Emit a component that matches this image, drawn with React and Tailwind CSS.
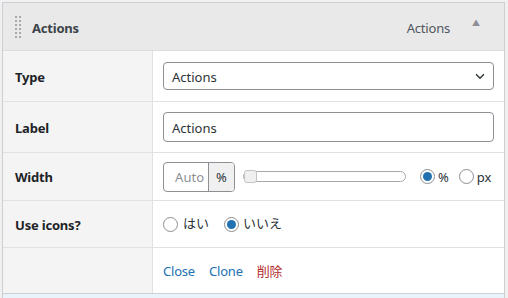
const FONT = { fontFamily: '"Noto Sans", "Noto Sans CJK JP", sans-serif' };

function Radio({ checked }) {
  return (
    <span className="flex h-[15px] w-[15px] items-center justify-center rounded-full border border-[#8c8f94] bg-white">
      {checked && <span className="h-[9px] w-[9px] rounded-full bg-[#2271b1]" />}
    </span>
  );
}

function Row({ label, children, h }) {
  return (
    <div className={`flex border-b border-[#e1e1e1] ${h}`}>
      <div className="flex w-[150px] shrink-0 items-center border-r border-[#e1e1e1] bg-[#f4f4f4] pl-[12px] pt-[3px] text-[13px] font-bold tracking-[-0.2px] text-[#1d2327]">
        {label}
      </div>
      <div className="flex flex-1 items-center pl-[10px] pr-[10px]">{children}</div>
    </div>
  );
}

export default function App() {
  return (
    <div className="h-[298px] w-[508px] overflow-hidden bg-[#f0f0f1] pl-[2px] pt-[2px]" style={FONT}>
      <div className="w-[503px] border border-[#ccd0d4] bg-white">
        <div className="flex h-[48px] items-center border-b border-[#dcdcde] bg-[#e9e9e9] pl-[12px] pr-[24px]">
          <div className="grid grid-cols-2 gap-x-[2px] gap-y-[2px]">
            {Array.from({ length: 12 }).map((_, i) => (
              <span key={i} className="h-[2px] w-[2px] bg-[#a7aaad]" />
            ))}
          </div>
          <span className="ml-[11px] pt-[5px] text-[13px] font-bold tracking-[-0.2px] text-[#3c434a]">Actions</span>
          <span className="ml-auto pt-[5px] text-[13px] tracking-[-0.2px] text-[#50575e]">Actions</span>
          <span className="mb-[8px] ml-[22px] text-[8px] text-[#8c8f94]">▲</span>
        </div>

        <Row label="Type" h="h-[51px]">
          <div className="flex h-[28px] w-[331px] items-center justify-between rounded-[4px] border border-[#8c8f94] pl-[8px] pr-[6px] text-[13px] text-[#2c3338]">
            <span className="pt-[3px]">Actions</span>
            <svg width="14" height="14" viewBox="0 0 16 16" fill="none" stroke="#2c3338" strokeWidth="1.6">
              <path d="M3.5 6l4.5 4.5 4.5-4.5" />
            </svg>
          </div>
        </Row>

        <Row label="Label" h="h-[51px]">
          <div className="flex h-[30px] w-[331px] items-center rounded-[4px] border border-[#8c8f94] pl-[8px] pt-[3px] text-[13px] text-[#2c3338]">
            Actions
          </div>
        </Row>

        <Row label="Width" h="h-[48px]">
          <div className="flex h-[30px] w-[72px] overflow-hidden rounded-[4px] border border-[#8c8f94] text-[13px]">
            <span className="flex flex-1 items-center justify-end pr-[4px] pt-[3px] text-[#8c8f94]">Auto</span>
            <span className="flex w-[26px] items-center justify-center border-l border-[#8c8f94] bg-[#f0f0f1] pt-[3px] text-[#2c3338]">%</span>
          </div>
          <div className="ml-[8px] flex h-[11px] w-[163px] items-center rounded-full border border-[#a7aaad] bg-white">
            <span className="h-[13px] w-[13px] rounded-[3px] border border-[#c3c4c7] bg-[#f0f0f1]" />
          </div>
          <div className="ml-[14px] flex items-center gap-[3px] text-[13px] text-[#2c3338]">
            <Radio checked />
            <span className="pt-[2px]">%</span>
          </div>
          <div className="ml-[10px] flex items-center gap-[3px] text-[13px] text-[#2c3338]">
            <Radio />
            <span className="pt-[2px]">px</span>
          </div>
        </Row>

        <Row label="Use icons?" h="h-[47px]">
          <div className="flex items-center gap-[5px] text-[13px] text-[#2c3338]">
            <Radio />
            <span>はい</span>
          </div>
          <div className="ml-[15px] flex items-center gap-[4px] text-[13px] text-[#2c3338]">
            <Radio checked />
            <span>いいえ</span>
          </div>
        </Row>

        <div className="flex h-[45px]">
          <div className="w-[150px] shrink-0 border-r border-[#e1e1e1] bg-[#f4f4f4]" />
          <div className="flex items-center gap-[14px] pl-[10px] pt-[2px] text-[13px] tracking-[-0.2px]">
            <span className="text-[#2271b1]">Close</span>
            <span className="text-[#2271b1]">Clone</span>
            <span className="text-[#b32d2e]">削除</span>
          </div>
        </div>
      </div>
      <div className="h-[10px] w-[503px] border-x border-[#ccd0d4] bg-[#eaf2fa]" />
    </div>
  );
}
